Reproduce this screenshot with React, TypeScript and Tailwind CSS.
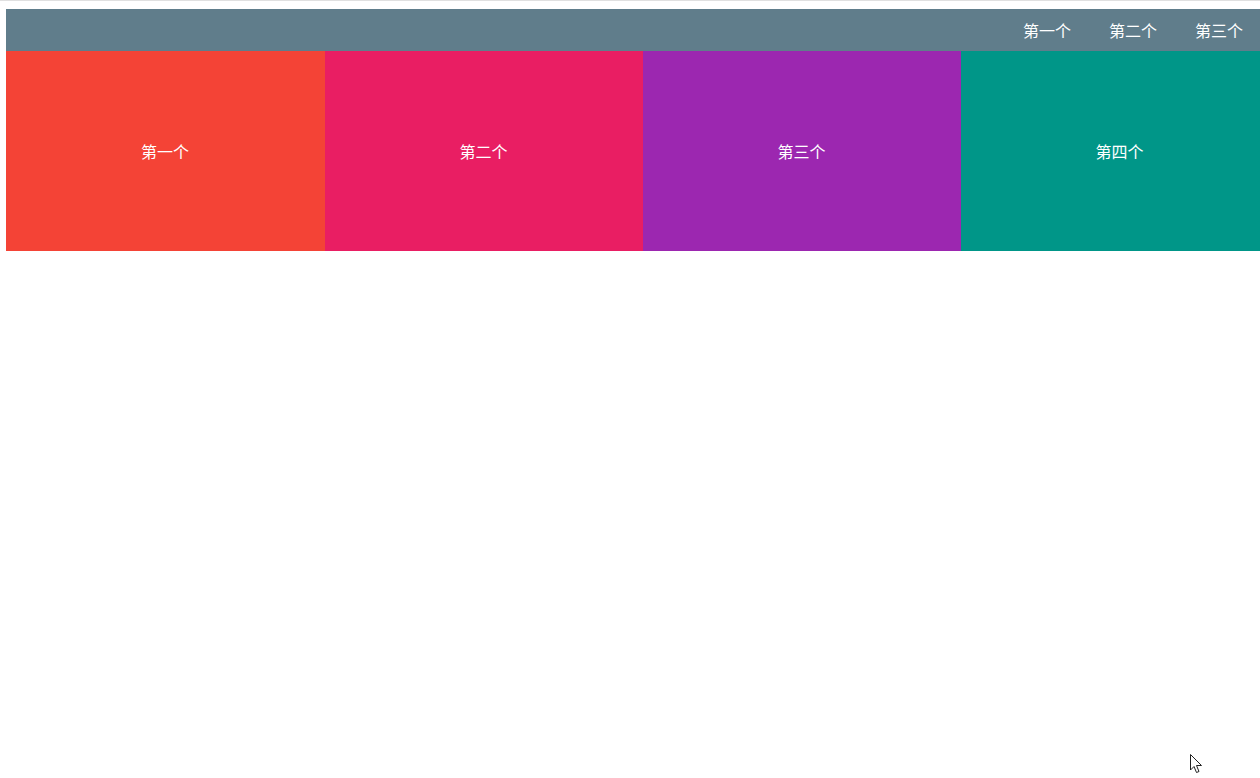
export default function App() {
  const boxes = [
    { label: "第一个", cls: "bg-[#f44336] w-[319px]" },
    { label: "第二个", cls: "bg-[#e91e63] w-[318px]" },
    { label: "第三个", cls: "bg-[#9c27b0] w-[318px]" },
    { label: "第四个", cls: "bg-[#009688] w-[318px]" },
  ];
  return (
    <div
      className="relative w-[1260px] h-[778px] overflow-hidden bg-white text-white text-[16px]"
      style={{ fontFamily: '"Microsoft YaHei", "Noto Sans CJK SC", sans-serif' }}
    >
      <div className="h-[1px] bg-[#e0e0e0]" />
      <div className="pt-[8px] pl-[6px]">
        <div className="h-[42px] bg-[#607d8b] flex justify-end items-center">
          <span className="px-[19px] leading-none pb-[1px]">第一个</span>
          <span className="px-[19px] leading-none pb-[1px]">第二个</span>
          <span className="pl-[19px] pr-[17px] leading-none pb-[1px]">第三个</span>
        </div>
        <div className="flex w-[1300px]">
          {boxes.map((b) => (
            <div key={b.label} className={`h-[200px] shrink-0 flex items-center justify-center pr-[1px] ${b.cls}`}>
              {b.label}
            </div>
          ))}
        </div>
      </div>
      <svg className="absolute left-[1190px] top-[754px]" width="13" height="20" viewBox="0 0 13 20">
        <path d="M0.5 0.5 L0.5 16 L4 12.5 L6.5 18.5 L9 17.5 L6.5 11.5 L11.5 11.5 Z" fill="white" stroke="#222" strokeWidth="1" strokeLinejoin="miter" />
      </svg>
    </div>
  );
}
